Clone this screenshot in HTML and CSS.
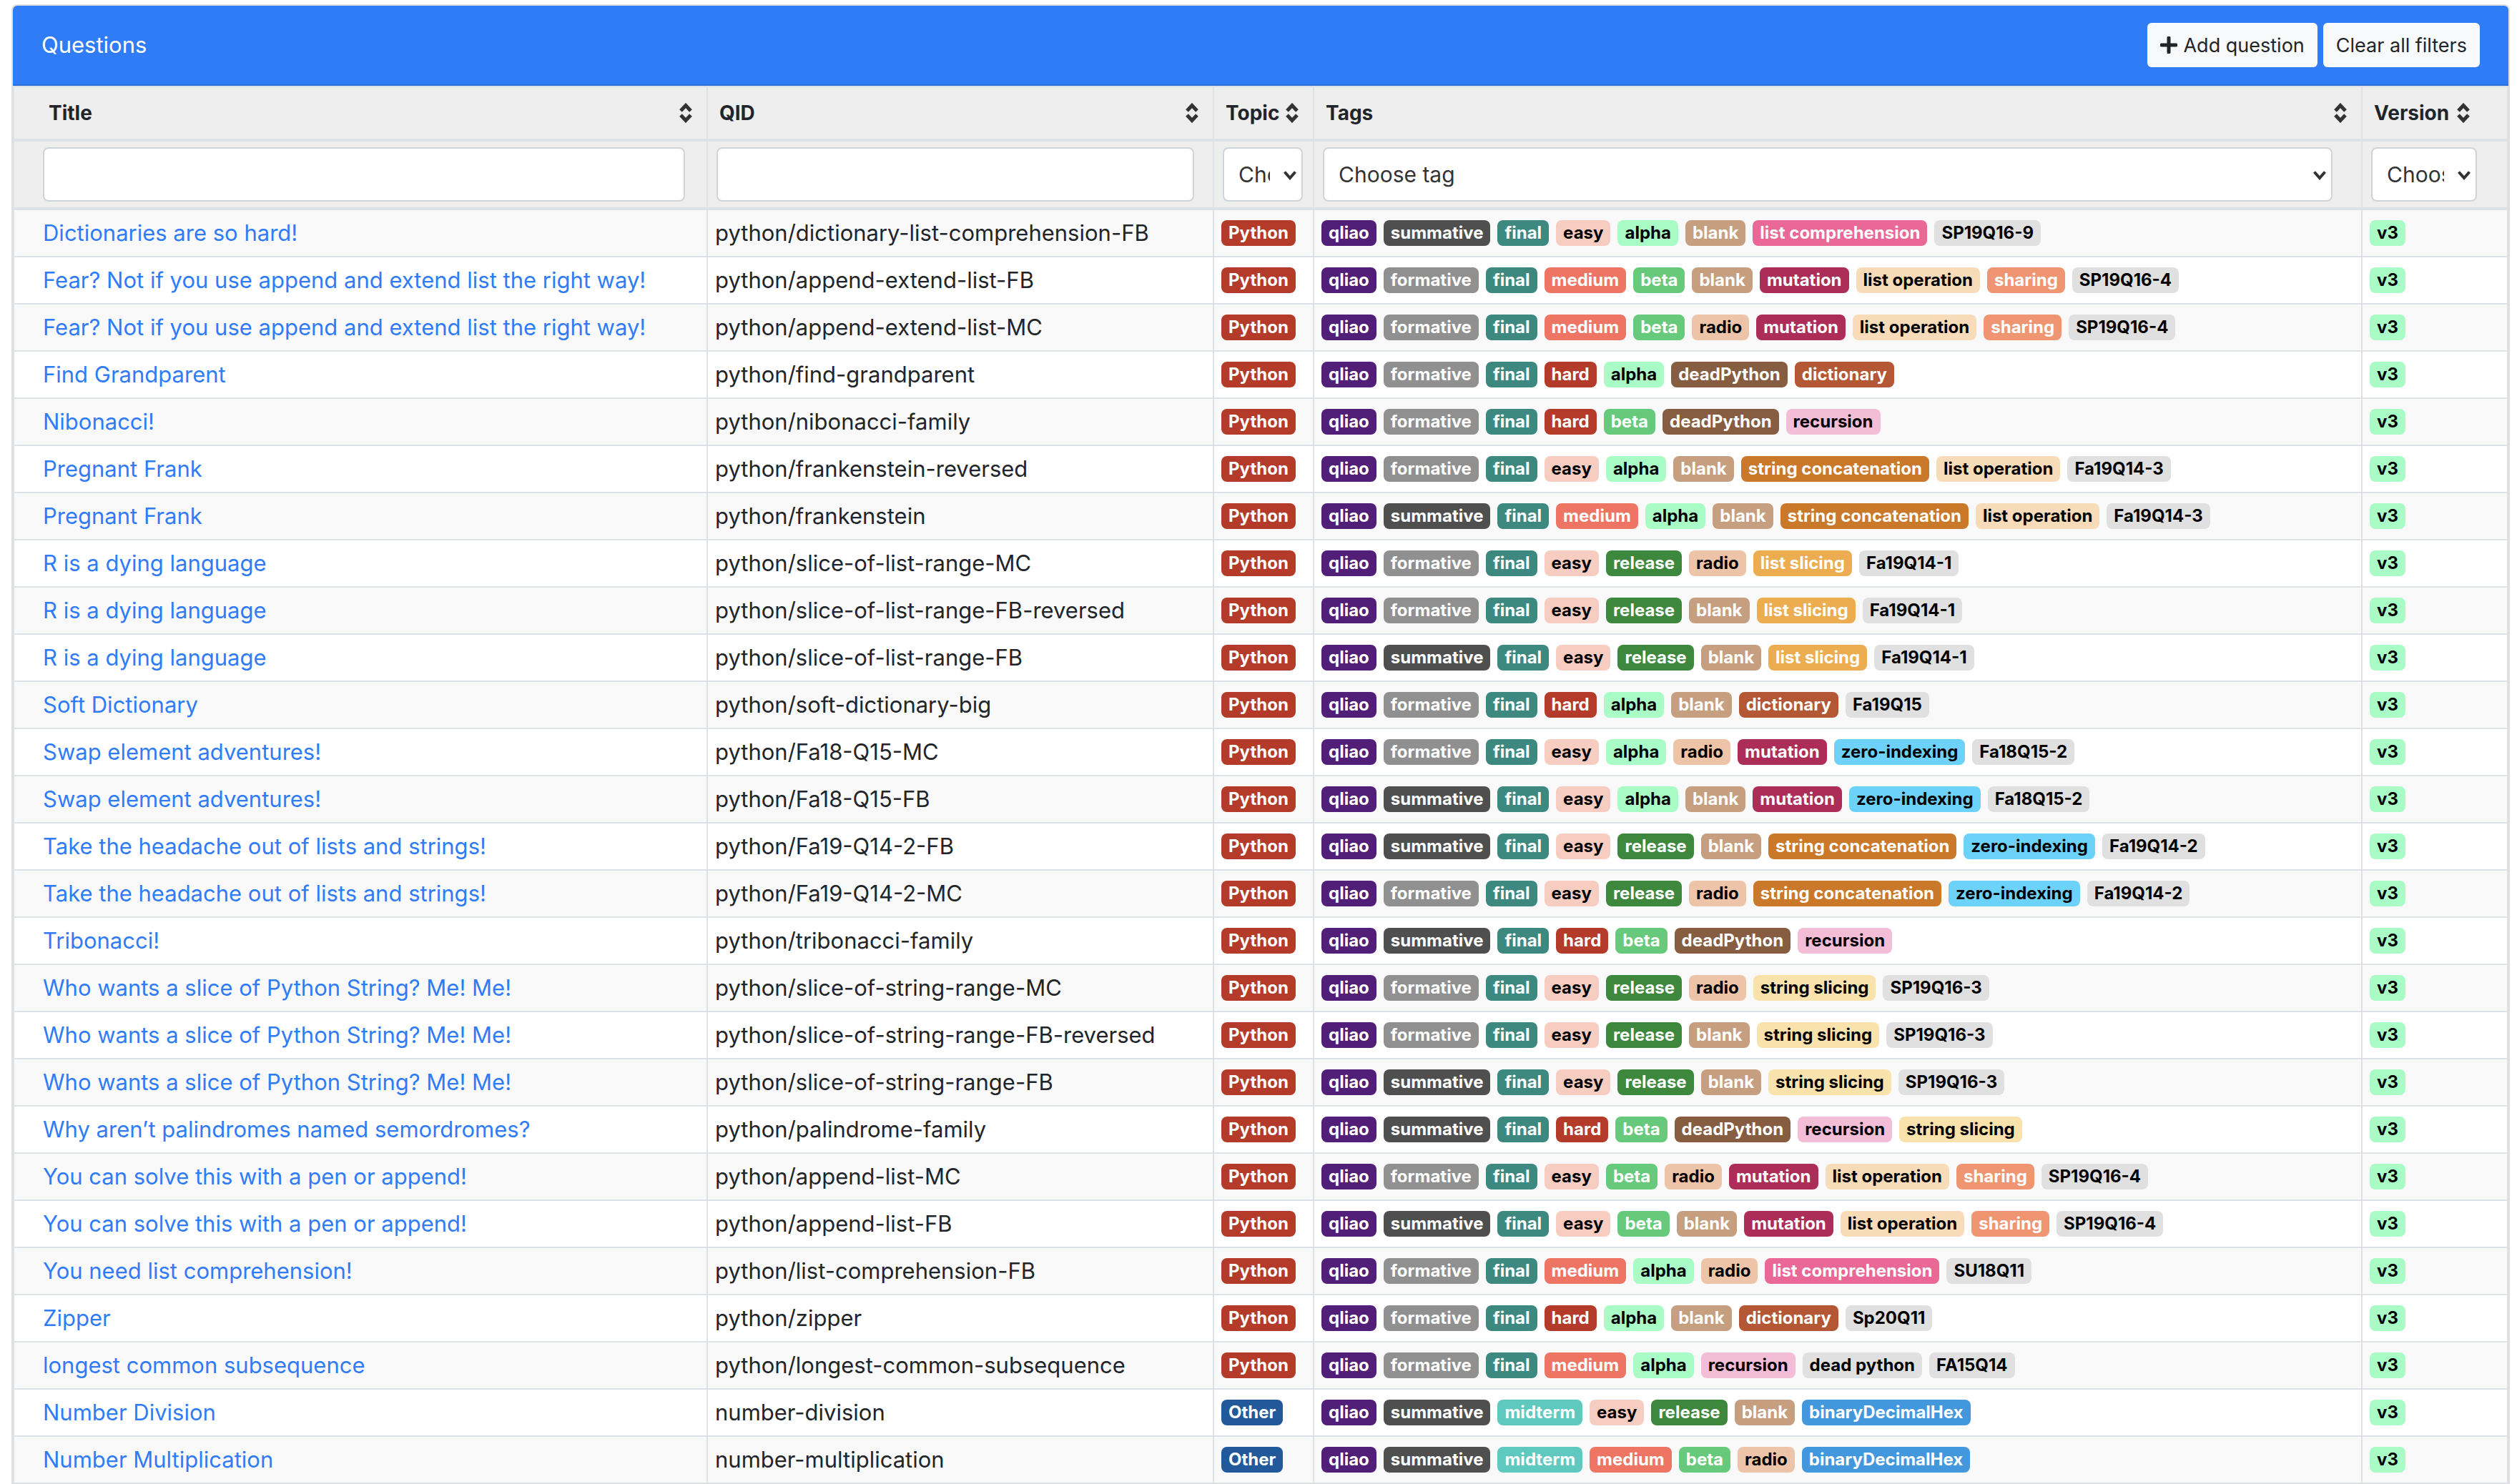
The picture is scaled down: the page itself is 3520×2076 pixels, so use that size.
FILE: index.html
```html
<!DOCTYPE html>
<html lang="en">
<head>
<meta charset="utf-8">
<title>Questions</title>
<link rel="stylesheet" href="styles.css">
</head>
<body>
<svg class="sprite" aria-hidden="true">
  <symbol id="sort" viewBox="0 0 18 28"><path d="M2 11L9 3.500L16 11M2 17L9 24.500L16 17"/></symbol>
  <symbol id="chevron" viewBox="0 0 20 14"><path d="M2.500 2.500L10 11L17.500 2.500"/></symbol>
  <symbol id="plus" viewBox="0 0 24 24"><path d="M12 2V22M2 12H22"/></symbol>
</svg>
<main class="card">
  <header class="card-header">
    <span class="card-title">Questions</span>
    <div class="actions">
      <button type="button" class="btn"><svg class="plus"><use href="#plus"/></svg>Add question</button>
      <button type="button" class="btn">Clear all filters</button>
    </div>
  </header>
  <table class="questions">
    <colgroup><col class="col-title"><col class="col-qid"><col class="col-topic"><col class="col-tags"><col class="col-version"></colgroup>
    <thead>
      <tr class="labels">
        <th scope="col"><button type="button" class="sort">Title<svg><use href="#sort"/></svg></button></th>
        <th scope="col"><button type="button" class="sort">QID<svg><use href="#sort"/></svg></button></th>
        <th scope="col"><button type="button" class="sort">Topic<svg><use href="#sort"/></svg></button></th>
        <th scope="col"><button type="button" class="sort">Tags<svg><use href="#sort"/></svg></button></th>
        <th scope="col"><button type="button" class="sort">Version<svg><use href="#sort"/></svg></button></th>
      </tr>
      <tr class="filters">
        <td><input type="text" class="field" aria-label="Title"></td>
        <td><input type="text" class="field" aria-label="QID"></td>
        <td><div class="select"><select class="field" aria-label="Topic"><option>Choose topic</option></select><svg><use href="#chevron"/></svg></div></td>
        <td><div class="select"><select class="field" aria-label="Tags"><option>Choose tag</option></select><svg><use href="#chevron"/></svg></div></td>
        <td><div class="select"><select class="field" aria-label="Version"><option>Choose version</option></select><svg><use href="#chevron"/></svg></div></td>
      </tr>
    </thead>
    <tbody>
      <tr><td><a href="#">Dictionaries are so hard!</a></td><td>python/dictionary-list-comprehension-FB</td><td><span class="tag red">Python</span></td>
        <td><div class="tags"><span class="tag purple">qliao</span><span class="tag gray3">summative</span><span class="tag green3">final</span><span class="tag red1">easy</span><span class="tag green1">alpha</span><span class="tag brown2">blank</span><span class="tag pink2">list comprehension</span><span class="tag gray1">SP19Q16-9</span></div></td><td><span class="tag green1">v3</span></td></tr>
      <tr><td><a href="#">Fear? Not if you use append and extend list the right way!</a></td><td>python/append-extend-list-FB</td><td><span class="tag red">Python</span></td>
        <td><div class="tags"><span class="tag purple">qliao</span><span class="tag gray2">formative</span><span class="tag green3">final</span><span class="tag red2">medium</span><span class="tag green2">beta</span><span class="tag brown2">blank</span><span class="tag pink3">mutation</span><span class="tag orange1">list operation</span><span class="tag orange2">sharing</span><span class="tag gray1">SP19Q16-4</span></div></td><td><span class="tag green1">v3</span></td></tr>
      <tr><td><a href="#">Fear? Not if you use append and extend list the right way!</a></td><td>python/append-extend-list-MC</td><td><span class="tag red">Python</span></td>
        <td><div class="tags"><span class="tag purple">qliao</span><span class="tag gray2">formative</span><span class="tag green3">final</span><span class="tag red2">medium</span><span class="tag green2">beta</span><span class="tag brown1">radio</span><span class="tag pink3">mutation</span><span class="tag orange1">list operation</span><span class="tag orange2">sharing</span><span class="tag gray1">SP19Q16-4</span></div></td><td><span class="tag green1">v3</span></td></tr>
      <tr><td><a href="#">Find Grandparent</a></td><td>python/find-grandparent</td><td><span class="tag red">Python</span></td>
        <td><div class="tags"><span class="tag purple">qliao</span><span class="tag gray2">formative</span><span class="tag green3">final</span><span class="tag red">hard</span><span class="tag green1">alpha</span><span class="tag brown3">deadPython</span><span class="tag rust">dictionary</span></div></td><td><span class="tag green1">v3</span></td></tr>
      <tr><td><a href="#">Nibonacci!</a></td><td>python/nibonacci-family</td><td><span class="tag red">Python</span></td>
        <td><div class="tags"><span class="tag purple">qliao</span><span class="tag gray2">formative</span><span class="tag green3">final</span><span class="tag red">hard</span><span class="tag green2">beta</span><span class="tag brown3">deadPython</span><span class="tag pink1">recursion</span></div></td><td><span class="tag green1">v3</span></td></tr>
      <tr><td><a href="#">Pregnant Frank</a></td><td>python/frankenstein-reversed</td><td><span class="tag red">Python</span></td>
        <td><div class="tags"><span class="tag purple">qliao</span><span class="tag gray2">formative</span><span class="tag green3">final</span><span class="tag red1">easy</span><span class="tag green1">alpha</span><span class="tag brown2">blank</span><span class="tag orange3">string concatenation</span><span class="tag orange1">list operation</span><span class="tag gray1">Fa19Q14-3</span></div></td><td><span class="tag green1">v3</span></td></tr>
      <tr><td><a href="#">Pregnant Frank</a></td><td>python/frankenstein</td><td><span class="tag red">Python</span></td>
        <td><div class="tags"><span class="tag purple">qliao</span><span class="tag gray3">summative</span><span class="tag green3">final</span><span class="tag red2">medium</span><span class="tag green1">alpha</span><span class="tag brown2">blank</span><span class="tag orange3">string concatenation</span><span class="tag orange1">list operation</span><span class="tag gray1">Fa19Q14-3</span></div></td><td><span class="tag green1">v3</span></td></tr>
      <tr><td><a href="#">R is a dying language</a></td><td>python/slice-of-list-range-MC</td><td><span class="tag red">Python</span></td>
        <td><div class="tags"><span class="tag purple">qliao</span><span class="tag gray2">formative</span><span class="tag green3">final</span><span class="tag red1">easy</span><span class="tag green4">release</span><span class="tag brown1">radio</span><span class="tag yellow2">list slicing</span><span class="tag gray1">Fa19Q14-1</span></div></td><td><span class="tag green1">v3</span></td></tr>
      <tr><td><a href="#">R is a dying language</a></td><td>python/slice-of-list-range-FB-reversed</td><td><span class="tag red">Python</span></td>
        <td><div class="tags"><span class="tag purple">qliao</span><span class="tag gray2">formative</span><span class="tag green3">final</span><span class="tag red1">easy</span><span class="tag green4">release</span><span class="tag brown2">blank</span><span class="tag yellow2">list slicing</span><span class="tag gray1">Fa19Q14-1</span></div></td><td><span class="tag green1">v3</span></td></tr>
      <tr><td><a href="#">R is a dying language</a></td><td>python/slice-of-list-range-FB</td><td><span class="tag red">Python</span></td>
        <td><div class="tags"><span class="tag purple">qliao</span><span class="tag gray3">summative</span><span class="tag green3">final</span><span class="tag red1">easy</span><span class="tag green4">release</span><span class="tag brown2">blank</span><span class="tag yellow2">list slicing</span><span class="tag gray1">Fa19Q14-1</span></div></td><td><span class="tag green1">v3</span></td></tr>
      <tr><td><a href="#">Soft Dictionary</a></td><td>python/soft-dictionary-big</td><td><span class="tag red">Python</span></td>
        <td><div class="tags"><span class="tag purple">qliao</span><span class="tag gray2">formative</span><span class="tag green3">final</span><span class="tag red">hard</span><span class="tag green1">alpha</span><span class="tag brown2">blank</span><span class="tag rust">dictionary</span><span class="tag gray1">Fa19Q15</span></div></td><td><span class="tag green1">v3</span></td></tr>
      <tr><td><a href="#">Swap element adventures!</a></td><td>python/Fa18-Q15-MC</td><td><span class="tag red">Python</span></td>
        <td><div class="tags"><span class="tag purple">qliao</span><span class="tag gray2">formative</span><span class="tag green3">final</span><span class="tag red1">easy</span><span class="tag green1">alpha</span><span class="tag brown1">radio</span><span class="tag pink3">mutation</span><span class="tag blue1">zero-indexing</span><span class="tag gray1">Fa18Q15-2</span></div></td><td><span class="tag green1">v3</span></td></tr>
      <tr><td><a href="#">Swap element adventures!</a></td><td>python/Fa18-Q15-FB</td><td><span class="tag red">Python</span></td>
        <td><div class="tags"><span class="tag purple">qliao</span><span class="tag gray3">summative</span><span class="tag green3">final</span><span class="tag red1">easy</span><span class="tag green1">alpha</span><span class="tag brown2">blank</span><span class="tag pink3">mutation</span><span class="tag blue1">zero-indexing</span><span class="tag gray1">Fa18Q15-2</span></div></td><td><span class="tag green1">v3</span></td></tr>
      <tr><td><a href="#">Take the headache out of lists and strings!</a></td><td>python/Fa19-Q14-2-FB</td><td><span class="tag red">Python</span></td>
        <td><div class="tags"><span class="tag purple">qliao</span><span class="tag gray3">summative</span><span class="tag green3">final</span><span class="tag red1">easy</span><span class="tag green4">release</span><span class="tag brown2">blank</span><span class="tag orange3">string concatenation</span><span class="tag blue1">zero-indexing</span><span class="tag gray1">Fa19Q14-2</span></div></td><td><span class="tag green1">v3</span></td></tr>
      <tr><td><a href="#">Take the headache out of lists and strings!</a></td><td>python/Fa19-Q14-2-MC</td><td><span class="tag red">Python</span></td>
        <td><div class="tags"><span class="tag purple">qliao</span><span class="tag gray2">formative</span><span class="tag green3">final</span><span class="tag red1">easy</span><span class="tag green4">release</span><span class="tag brown1">radio</span><span class="tag orange3">string concatenation</span><span class="tag blue1">zero-indexing</span><span class="tag gray1">Fa19Q14-2</span></div></td><td><span class="tag green1">v3</span></td></tr>
      <tr><td><a href="#">Tribonacci!</a></td><td>python/tribonacci-family</td><td><span class="tag red">Python</span></td>
        <td><div class="tags"><span class="tag purple">qliao</span><span class="tag gray3">summative</span><span class="tag green3">final</span><span class="tag red">hard</span><span class="tag green2">beta</span><span class="tag brown3">deadPython</span><span class="tag pink1">recursion</span></div></td><td><span class="tag green1">v3</span></td></tr>
      <tr><td><a href="#">Who wants a slice of Python String? Me! Me!</a></td><td>python/slice-of-string-range-MC</td><td><span class="tag red">Python</span></td>
        <td><div class="tags"><span class="tag purple">qliao</span><span class="tag gray2">formative</span><span class="tag green3">final</span><span class="tag red1">easy</span><span class="tag green4">release</span><span class="tag brown1">radio</span><span class="tag yellow1">string slicing</span><span class="tag gray1">SP19Q16-3</span></div></td><td><span class="tag green1">v3</span></td></tr>
      <tr><td><a href="#">Who wants a slice of Python String? Me! Me!</a></td><td>python/slice-of-string-range-FB-reversed</td><td><span class="tag red">Python</span></td>
        <td><div class="tags"><span class="tag purple">qliao</span><span class="tag gray2">formative</span><span class="tag green3">final</span><span class="tag red1">easy</span><span class="tag green4">release</span><span class="tag brown2">blank</span><span class="tag yellow1">string slicing</span><span class="tag gray1">SP19Q16-3</span></div></td><td><span class="tag green1">v3</span></td></tr>
      <tr><td><a href="#">Who wants a slice of Python String? Me! Me!</a></td><td>python/slice-of-string-range-FB</td><td><span class="tag red">Python</span></td>
        <td><div class="tags"><span class="tag purple">qliao</span><span class="tag gray3">summative</span><span class="tag green3">final</span><span class="tag red1">easy</span><span class="tag green4">release</span><span class="tag brown2">blank</span><span class="tag yellow1">string slicing</span><span class="tag gray1">SP19Q16-3</span></div></td><td><span class="tag green1">v3</span></td></tr>
      <tr><td><a href="#">Why aren’t palindromes named semordromes?</a></td><td>python/palindrome-family</td><td><span class="tag red">Python</span></td>
        <td><div class="tags"><span class="tag purple">qliao</span><span class="tag gray3">summative</span><span class="tag green3">final</span><span class="tag red">hard</span><span class="tag green2">beta</span><span class="tag brown3">deadPython</span><span class="tag pink1">recursion</span><span class="tag yellow1">string slicing</span></div></td><td><span class="tag green1">v3</span></td></tr>
      <tr><td><a href="#">You can solve this with a pen or append!</a></td><td>python/append-list-MC</td><td><span class="tag red">Python</span></td>
        <td><div class="tags"><span class="tag purple">qliao</span><span class="tag gray2">formative</span><span class="tag green3">final</span><span class="tag red1">easy</span><span class="tag green2">beta</span><span class="tag brown1">radio</span><span class="tag pink3">mutation</span><span class="tag orange1">list operation</span><span class="tag orange2">sharing</span><span class="tag gray1">SP19Q16-4</span></div></td><td><span class="tag green1">v3</span></td></tr>
      <tr><td><a href="#">You can solve this with a pen or append!</a></td><td>python/append-list-FB</td><td><span class="tag red">Python</span></td>
        <td><div class="tags"><span class="tag purple">qliao</span><span class="tag gray3">summative</span><span class="tag green3">final</span><span class="tag red1">easy</span><span class="tag green2">beta</span><span class="tag brown2">blank</span><span class="tag pink3">mutation</span><span class="tag orange1">list operation</span><span class="tag orange2">sharing</span><span class="tag gray1">SP19Q16-4</span></div></td><td><span class="tag green1">v3</span></td></tr>
      <tr><td><a href="#">You need list comprehension!</a></td><td>python/list-comprehension-FB</td><td><span class="tag red">Python</span></td>
        <td><div class="tags"><span class="tag purple">qliao</span><span class="tag gray2">formative</span><span class="tag green3">final</span><span class="tag red2">medium</span><span class="tag green1">alpha</span><span class="tag brown1">radio</span><span class="tag pink2">list comprehension</span><span class="tag gray1">SU18Q11</span></div></td><td><span class="tag green1">v3</span></td></tr>
      <tr><td><a href="#">Zipper</a></td><td>python/zipper</td><td><span class="tag red">Python</span></td>
        <td><div class="tags"><span class="tag purple">qliao</span><span class="tag gray2">formative</span><span class="tag green3">final</span><span class="tag red">hard</span><span class="tag green1">alpha</span><span class="tag brown2">blank</span><span class="tag rust">dictionary</span><span class="tag gray1">Sp20Q11</span></div></td><td><span class="tag green1">v3</span></td></tr>
      <tr><td><a href="#">longest common subsequence</a></td><td>python/longest-common-subsequence</td><td><span class="tag red">Python</span></td>
        <td><div class="tags"><span class="tag purple">qliao</span><span class="tag gray2">formative</span><span class="tag green3">final</span><span class="tag red2">medium</span><span class="tag green1">alpha</span><span class="tag pink1">recursion</span><span class="tag gray1">dead python</span><span class="tag gray1">FA15Q14</span></div></td><td><span class="tag green1">v3</span></td></tr>
      <tr><td><a href="#">Number Division</a></td><td>number-division</td><td><span class="tag blue3">Other</span></td>
        <td><div class="tags"><span class="tag purple">qliao</span><span class="tag gray3">summative</span><span class="tag turquoise">midterm</span><span class="tag red1">easy</span><span class="tag green4">release</span><span class="tag brown2">blank</span><span class="tag blue2">binaryDecimalHex</span></div></td><td><span class="tag green1">v3</span></td></tr>
      <tr><td><a href="#">Number Multiplication</a></td><td>number-multiplication</td><td><span class="tag blue3">Other</span></td>
        <td><div class="tags"><span class="tag purple">qliao</span><span class="tag gray3">summative</span><span class="tag turquoise">midterm</span><span class="tag red2">medium</span><span class="tag green2">beta</span><span class="tag brown1">radio</span><span class="tag blue2">binaryDecimalHex</span></div></td><td><span class="tag green1">v3</span></td></tr>
    </tbody>
  </table>
</main>
</body>
</html>
```
FILE: styles.css
```css
* { box-sizing: border-box; }

body {
  margin: 6px 10px 0 16px;
  background: #fff;
  color: #212529;
  font: 31px/48px Inter, "Liberation Sans", sans-serif;
}

button, input, select { font: inherit; color: inherit; }

.sprite { position: absolute; width: 0; height: 0; }
svg { fill: none; stroke: currentColor; flex: none; }

.card {
  border: 2px solid #dfdfdf;
  border-bottom: 0;
  border-radius: 8px 8px 0 0;
  overflow: hidden;
}

.card-header {
  display: flex;
  align-items: center;
  justify-content: space-between;
  padding: 24px 40px;
  background: #307cf6;
  border-bottom: 2px solid #2c6fdc;
  color: #fff;
}

.actions { display: flex; gap: 8px; }

.btn {
  display: flex;
  align-items: center;
  gap: 8px;
  height: 62px;
  padding: 2px 18px 0;
  border: 0;
  border-radius: 6px;
  background: #f8f9fa;
  color: #212529;
  font-size: 27px;
}

.plus { width: 24px; height: 24px; margin-bottom: 2px; stroke-width: 5; stroke-linecap: round; }

.questions {
  width: 100%;
  table-layout: fixed;
  border-collapse: separate;
  border-spacing: 0;
  border-top: 2px solid #dee2e6;
  border-right: 2px solid #dee2e6;
}

.col-title { width: 970px; }
.col-qid { width: 708px; }
.col-topic { width: 140px; }
.col-version { width: 204px; }

th, td {
  height: 66px;
  padding: 0 0 0 10px;
  border-left: 2px solid #dee2e6;
  border-bottom: 2px solid #dee2e6;
  text-align: left;
  vertical-align: middle;
  white-space: nowrap;
}

tbody td:first-child { padding-left: 40px; }
tbody tr:nth-child(odd) { background: #f9f9f9; }
thead { background: #eee; }

.labels th { height: 76px; padding: 0 20px 0 16px; border-bottom-width: 4px; }
.labels th:first-child { padding-left: 48px; }
.labels th:last-child { padding-right: 52px; }

.sort {
  display: flex;
  align-items: center;
  justify-content: space-between;
  width: 100%;
  padding: 0;
  border: 0;
  background: none;
  font-size: 28px;
  font-weight: 700;
}

.sort svg { width: 18px; height: 28px; color: #333; stroke-width: 5; }

.filters td { height: 96px; padding: 0 14px 0 12px; border-bottom-width: 4px; }
.filters td:nth-child(1) { padding: 0 30px 0 40px; }
.filters td:nth-child(2) { padding-right: 26px; }
.filters td:nth-child(4) { padding-right: 40px; }
.filters td:nth-child(5) { padding-right: 42px; }

.field {
  display: block;
  width: 100%;
  height: 76px;
  padding: 0 20px;
  border: 2px solid #ced4da;
  border-radius: 8px;
  background: #fff;
  color: #333;
  font-size: 30px;
}

.select { position: relative; }
.select .field { appearance: none; padding-right: 44px; }
.select svg {
  position: absolute;
  right: 8px;
  top: 32px;
  width: 20px;
  height: 14px;
  color: #333;
  stroke-width: 4;
  pointer-events: none;
}

a { color: #307cf6; text-decoration: none; }

.tags { display: flex; gap: 10px; }

.tag {
  display: block;
  width: max-content;
  padding: 6px 10px;
  border-radius: 8px;
  color: #fff;
  font-size: 24px;
  font-weight: 700;
  line-height: 24px;
}

.purple { background: #511e78; }
.gray1 { background: #e0e0e0; color: #000; }
.gray2 { background: #909090; }
.gray3 { background: #4f4f4f; }
.red1 { background: #f8cdc1; color: #000; }
.red2 { background: #ee7564; }
.red { background: #b43a29; }
.rust { background: #b35735; }
.green1 { background: #aafcc7; color: #000; }
.green2 { background: #67c97c; }
.green3 { background: #3d897f; }
.green4 { background: #3e883e; }
.turquoise { background: #60c9bf; }
.brown1 { background: #eec4a9; color: #000; }
.brown2 { background: #c69f80; }
.brown3 { background: #875d41; }
.pink1 { background: #f4bdd7; color: #000; }
.pink2 { background: #e96896; }
.pink3 { background: #ab2d58; }
.orange1 { background: #f8dbb8; color: #000; }
.orange2 { background: #f09571; }
.orange3 { background: #ca782a; }
.yellow1 { background: #f9e2ac; color: #000; }
.yellow2 { background: #ecad50; }
.blue1 { background: #6cd2f9; color: #000; }
.blue2 { background: #4397dc; }
.blue3 { background: #22599b; }
```
